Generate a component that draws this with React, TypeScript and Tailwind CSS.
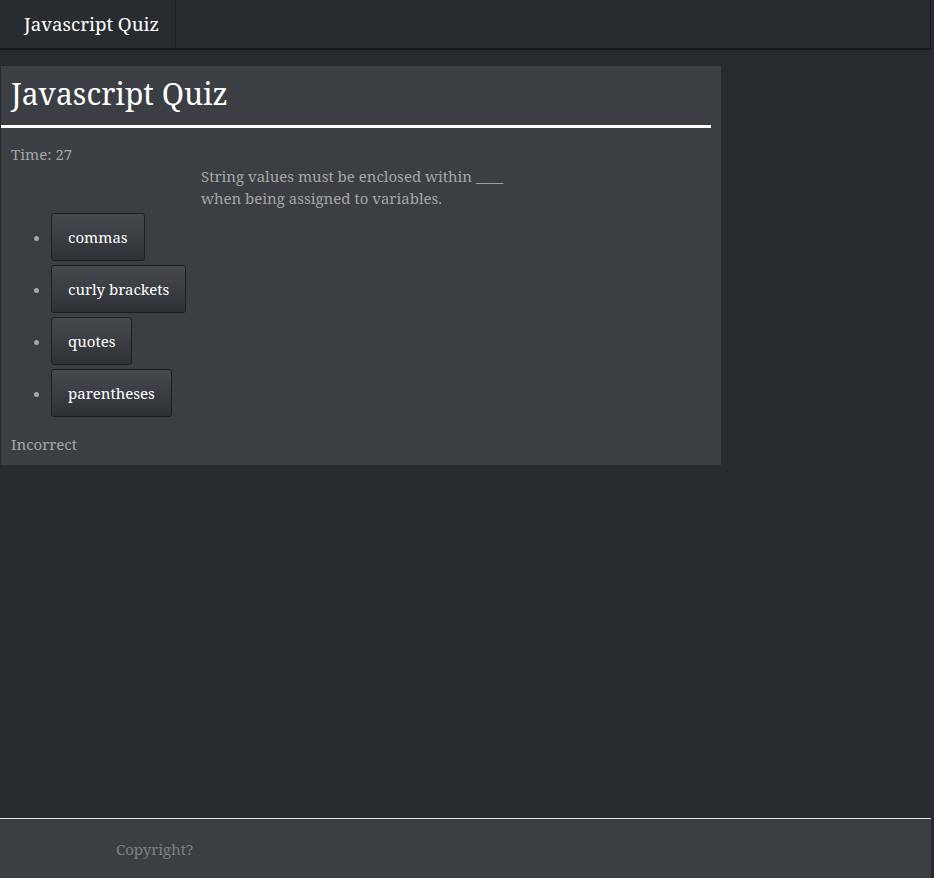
const answers = ["commas", "curly brackets", "quotes", "parentheses"];

export default function App() {
  return (
    <div
      className="flex min-h-[878px] flex-col bg-[#272a2f] text-[15px]"
      style={{ fontFamily: '"Noto Serif", "DejaVu Serif", serif' }}
    >
      <header className="mr-[3px] flex h-[50px] border-r border-b-2 border-[#15171a] bg-[#282b30]">
        <a className="flex items-center border-r border-[#1e2024] pr-[16px] pl-6 text-[18.7px] text-white">
          Javascript Quiz
        </a>
      </header>

      <main className="flex-1 pt-4">
        <div className="ml-px w-[720px] bg-[#3b3f44] pb-[10px]">
          <h1 className="mr-[10px] border-b-[3px] border-white px-[10px] pt-[8px] pb-[11px] text-[30px] leading-[40px] text-white">
            Javascript Quiz
          </h1>
          <div className="px-[10px] pt-[15px]">
            <p className="text-[#a3a5a7] leading-[22px]">Time: 27</p>
            <p className="ml-[190px] w-[315px] text-[#a3a5a7] leading-[22px]">
              String values must be enclosed within ____ when being assigned to variables.
            </p>
            <ul className="mt-[4px] list-disc pl-[40px] text-[#a3a5a7] marker:text-[#a3a5a7]">
              {answers.map((a) => (
                <li key={a} className="mb-[4px]">
                  <button className="h-[48px] rounded-[3px] border border-[#1c1e21] bg-gradient-to-b from-[#464a50] to-[#2e3136] px-4 text-white">
                    {a}
                  </button>
                </li>
              ))}
            </ul>
            <p className="pt-[12px] text-[#a3a5a7] leading-[22px]">Incorrect</p>
          </div>
        </div>
      </main>

      <footer className="mr-[3px] flex h-[60px] items-center border-t border-[#e5e5e5] bg-[#3b3f44] pt-[2px] pl-[116px] text-[#7c7f83]">
        Copyright?
      </footer>
    </div>
  );
}
